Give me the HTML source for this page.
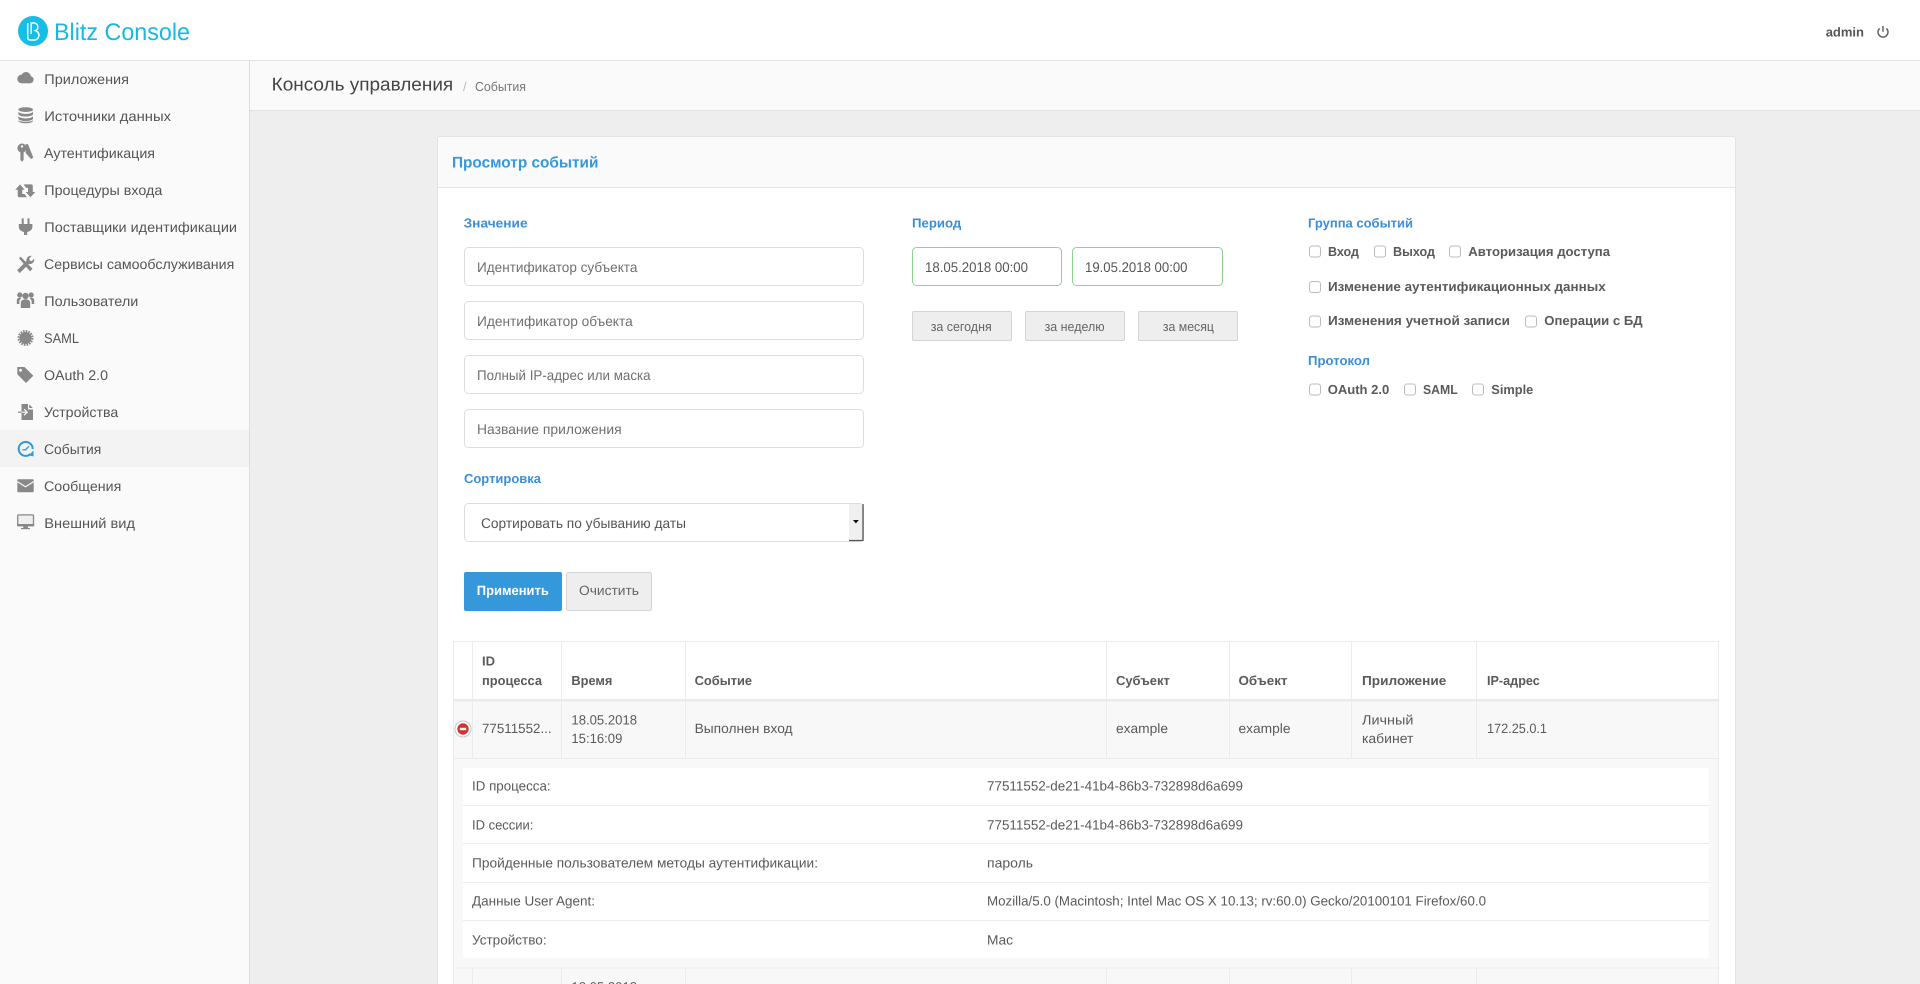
<!DOCTYPE html>
<html lang="ru">
<head>
<meta charset="utf-8">
<title>Blitz Console</title>
<style>
html,body{margin:0;padding:0;width:1920px;height:984px;overflow:hidden;background:#eee}
svg{display:block;font-family:"Liberation Sans",sans-serif;text-rendering:geometricPrecision}
.n{font-size:14px;fill:#555}
.ic{fill:#888}
.lb{font-size:13px;font-weight:bold;fill:#3a8fd9}
.ph{font-size:14px;fill:#6f6f6f}
.d{font-size:14px;fill:#555}
.b{font-size:13px;fill:#666}
.c{font-size:13px;font-weight:bold;fill:#5a5a5a}
.th{font-size:13px;font-weight:bold;fill:#5a5a5a}
.td{font-size:13.5px;fill:#5a5a5a}
.cb{fill:#fff;stroke:#bbb;stroke-width:1}
.inp{fill:#fff;stroke:#ddd;stroke-width:1}
.dt{fill:#fff;stroke:#90d38f;stroke-width:1}
.qb{fill:#eee;stroke:#d4d4d4;stroke-width:1}
.ln{stroke:#ececec;stroke-width:1}
</style>
</head>
<body>
<svg xmlns="http://www.w3.org/2000/svg" width="1920" height="984" viewBox="0 0 1920 984">
<!-- backgrounds -->
<rect width="1920" height="984" fill="#eee"/>
<rect width="1920" height="60" fill="#fff"/>
<rect y="60" width="1920" height="1" fill="#e2e2e2"/>
<rect y="61" width="249" height="923" fill="#fafafa"/>
<rect x="249" y="61" width="1" height="923" fill="#ddd"/>
<rect x="250" y="61" width="1670" height="49" fill="#fafafa"/>
<rect x="250" y="110" width="1670" height="1" fill="#e2e2e2"/>

<!-- header -->
<circle cx="33" cy="31" r="15" fill="#16bde5"/>
<path d="M27.7 23V37.5q0 2.5 2.5 2.5H34.5a4.8 4.8 0 0 0 1-9.4a4 4 0 0 0-1.2-7.6H31.2V34" fill="none" stroke="#fff" stroke-width="1.5"/>
<text x="54" y="40" font-size="24" fill="#18b8e2" textLength="136" lengthAdjust="spacingAndGlyphs">Blitz Console</text>
<text x="1825.7" y="36.7" font-size="13" font-weight="bold" fill="#555" textLength="38.3" lengthAdjust="spacingAndGlyphs">admin</text>
<path d="M1879.6 28.4A5 5 0 1 0 1886.4 28.4M1883 26V31.8" fill="none" stroke="#666" stroke-width="1.5"/>

<!-- page heading -->
<text x="271.7" y="90.5" font-size="18.5" fill="#444" textLength="181.5" lengthAdjust="spacingAndGlyphs">Консоль управления</text>
<text x="463" y="91" font-size="13" fill="#bbb">/</text>
<text x="475" y="91" font-size="13" fill="#777" textLength="51" lengthAdjust="spacingAndGlyphs">События</text>

<!-- sidebar -->
<rect y="430" width="249" height="37" fill="#f3f3f3"/>
<text class="n" x="44.3" y="84" textLength="84.7" lengthAdjust="spacingAndGlyphs">Приложения</text>
<text class="n" x="44.3" y="121" textLength="126.7" lengthAdjust="spacingAndGlyphs">Источники данных</text>
<text class="n" x="44" y="158" textLength="111" lengthAdjust="spacingAndGlyphs">Аутентификация</text>
<text class="n" x="44.3" y="195" textLength="118" lengthAdjust="spacingAndGlyphs">Процедуры входа</text>
<text class="n" x="44.3" y="232" textLength="192.7" lengthAdjust="spacingAndGlyphs">Поставщики идентификации</text>
<text class="n" x="44" y="269" textLength="190.3" lengthAdjust="spacingAndGlyphs">Сервисы самообслуживания</text>
<text class="n" x="44.3" y="306" textLength="94" lengthAdjust="spacingAndGlyphs">Пользователи</text>
<text class="n" x="44" y="343" textLength="35" lengthAdjust="spacingAndGlyphs">SAML</text>
<text class="n" x="44" y="380" textLength="64" lengthAdjust="spacingAndGlyphs">OAuth 2.0</text>
<text class="n" x="44" y="417" textLength="74.3" lengthAdjust="spacingAndGlyphs">Устройства</text>
<text class="n" x="44" y="454" textLength="57.3" lengthAdjust="spacingAndGlyphs">События</text>
<text class="n" x="44" y="491" textLength="77.3" lengthAdjust="spacingAndGlyphs">Сообщения</text>
<text class="n" x="44.3" y="528" textLength="90.7" lengthAdjust="spacingAndGlyphs">Внешний вид</text>

<!-- sidebar icons -->
<g class="ic">
<!-- cloud -->
<circle cx="21.5" cy="79" r="4.2"/><circle cx="26" cy="77" r="5"/><circle cx="30" cy="79.7" r="3.6"/><rect x="21.5" y="79.5" width="8.5" height="3.8"/>
<!-- database -->
<ellipse cx="25.7" cy="109.6" rx="7.3" ry="2.4"/>
<path d="M18.4 111.8v2.3c0 1.3 3.3 2.4 7.3 2.4s7.3-1.1 7.3-2.4v-2.3c-1 1.3-3.8 2.2-7.3 2.2s-6.3-.9-7.3-2.2z"/>
<path d="M18.4 116.3v2.3c0 1.3 3.3 2.4 7.3 2.4s7.3-1.1 7.3-2.4v-2.3c-1 1.3-3.8 2.2-7.3 2.2s-6.3-.9-7.3-2.2z"/>
<path d="M18.4 120.3v.6c0 1.3 3.3 2.4 7.3 2.4s7.3-1.1 7.3-2.4v-.6c-1 1.3-3.8 1.4-7.3 1.4s-6.3-.1-7.3-1.4z"/>
<!-- keys -->
<path fill-rule="evenodd" d="M22 143.5a4.6 4.6 0 0 1 1.6 8.9V160l-1.6 1.7-1.6-1.7v-7.6A4.6 4.6 0 0 1 22 143.5zM22 145.2a1.2 1.2 0 1 0 .01 0z"/>
<path d="M25.5 144l2.5.2 5.3 13.3-2.2 1.6-5.6-6.2c.8-2.6.8-6 0-8.9z"/>
<!-- retweet -->
<path d="M15.3 189.7L20 184.4 24.7 189.7H22.3V194H24.5L27 197.3H19.5Q17.7 197.3 17.7 195.5V189.7Z"/>
<path d="M35.3 192L30.5 197.3 25.7 192H28V187.7H26L23.5 184.4H31Q32.8 184.4 32.8 186.2V192Z"/>
<!-- plug -->
<rect x="21.7" y="218.3" width="2" height="6"/><rect x="27.5" y="218.3" width="2" height="6"/>
<path d="M18.8 224H32.4V226.8C32.4 229.8 29.8 231.6 27.2 232V235H24V232C21.4 231.6 18.8 229.8 18.8 226.8Z"/>
<!-- tools -->
<path d="M19 258.2l1.6-1.6 12 12.2-2.6 2.6z"/>
<path d="M18.4 270.3l9.3-9.4a4.3 4.3 0 0 1 5.2-5l-2.5 2.6.6 2 2 .6 2.3-2.5a4.3 4.3 0 0 1-5.1 5.3l-9.3 9.2z" transform="translate(-1.2 0)"/>
<!-- users -->
<circle cx="25.5" cy="296" r="3.2"/><circle cx="19.8" cy="295" r="2.6"/><circle cx="31.2" cy="295" r="2.6"/>
<path d="M20.8 308V303c0-2.6 1.8-3.6 4.7-3.6s4.7 1 4.7 3.6v5z"/>
<path d="M16.8 304v-3.5c0-2 1.2-2.6 3-2.6.6 0 1 .1 1.6.4-1.2.8-2.1 2.2-2.1 4v1.7z"/>
<path d="M34.2 304v-3.5c0-2-1.2-2.6-3-2.6-.6 0-1 .1-1.6.4 1.2.8 2.1 2.2 2.1 4v1.7z"/>
<!-- seal -->
<circle cx="25.5" cy="338" r="6"/>
<circle cx="25.5" cy="338" r="6.8" fill="none" stroke="#888" stroke-width="2.4" stroke-dasharray="1.6 1.07"/>
<!-- tag -->
<path fill-rule="evenodd" d="M17.3 367H24.5L33.3 375.8 26 383 17.3 374.2ZM20.5 368.8a1.5 1.5 0 1 0 .01 0Z"/>
<!-- file import -->
<path d="M21.5 404H28V409.5H33V420H21.5Z"/><path d="M29.2 404.2L32.8 408H29.2Z"/>
</g>
<path d="M18 412.2H27M24 409.2L27.2 412.2 24 415.2" fill="none" stroke="#fafafa" stroke-width="1.2"/>
<path d="M18 412.2H21.5" stroke="#888" stroke-width="1.2"/>
<!-- events -->
<path d="M30.5 454A7 7 0 1 1 32.7 449" fill="none" stroke="#3498db" stroke-width="2"/>
<path d="M22.5 449.8H25.6L28.8 446.4" fill="none" stroke="#3498db" stroke-width="1.4"/>
<path d="M33.5 450.5L29 455.2 33.5 456.5Z" fill="#3498db"/>
<!-- mail -->
<rect x="17.3" y="479.3" width="16.4" height="13" rx="1" class="ic"/>
<path d="M17.3 481.6L25.5 486.8 33.7 481.6" fill="none" stroke="#f6f6f6" stroke-width="1.2"/>
<!-- monitor -->
<rect x="17.7" y="514.9" width="15.8" height="10.8" rx="1" fill="#efefef" stroke="#888" stroke-width="1.3"/>
<rect x="17" y="524" width="17.2" height="2.2" class="ic"/>
<rect x="23.3" y="526" width="4.6" height="2" class="ic"/><rect x="21" y="528" width="9" height="1.2" class="ic"/>

<!-- panel -->
<rect x="437.5" y="136.5" width="1298" height="860" rx="2" fill="#fff" stroke="#e4e4e4"/>
<path d="M438 187V139q0-2 2-2H1733q2 0 2 2V187Z" fill="#fafafa"/>
<rect x="438" y="187" width="1297" height="1" fill="#e6e6e6"/>
<text x="452" y="167.5" font-size="15.5" font-weight="bold" fill="#3498db" textLength="146.4" lengthAdjust="spacingAndGlyphs">Просмотр событий</text>

<!-- column 1 -->
<text class="lb" x="463.6" y="227.7" textLength="64" lengthAdjust="spacingAndGlyphs">Значение</text>
<rect class="inp" x="464.5" y="247.5" width="399" height="38" rx="4"/>
<rect class="inp" x="464.5" y="301.5" width="399" height="38" rx="4"/>
<rect class="inp" x="464.5" y="355.5" width="399" height="38" rx="4"/>
<rect class="inp" x="464.5" y="409.5" width="399" height="38" rx="4"/>
<text class="ph" x="477" y="272" textLength="160.4" lengthAdjust="spacingAndGlyphs">Идентификатор субъекта</text>
<text class="ph" x="477" y="326" textLength="155.7" lengthAdjust="spacingAndGlyphs">Идентификатор объекта</text>
<text class="ph" x="477" y="380" textLength="173.6" lengthAdjust="spacingAndGlyphs">Полный IP-адрес или маска</text>
<text class="ph" x="477" y="434" textLength="144.6" lengthAdjust="spacingAndGlyphs">Название приложения</text>
<text class="lb" x="464" y="483" textLength="77" lengthAdjust="spacingAndGlyphs">Сортировка</text>
<rect class="inp" x="464.5" y="503.5" width="399" height="38" rx="4"/>
<text class="d" x="481" y="528.2" textLength="205" lengthAdjust="spacingAndGlyphs">Сортировать по убыванию даты</text>
<rect x="849" y="504" width="14" height="36" fill="#f0f0f0"/>
<path d="M863 504V540.5H849" fill="none" stroke="#555" stroke-width="1.3"/>
<path d="M853 520H858.8L855.9 523.5Z" fill="#111"/>
<rect x="464" y="572" width="98" height="39" rx="2" fill="#3498db"/>
<text x="476.8" y="595" font-size="13.5" font-weight="bold" fill="#fff" textLength="72" lengthAdjust="spacingAndGlyphs">Применить</text>
<rect class="qb" x="566.5" y="572.5" width="85" height="38" rx="2"/>
<text x="579" y="595" font-size="13.5" fill="#666" textLength="60" lengthAdjust="spacingAndGlyphs">Очистить</text>

<!-- column 2 -->
<text class="lb" x="912" y="227.7" textLength="49.3" lengthAdjust="spacingAndGlyphs">Период</text>
<rect class="dt" x="912.5" y="247.5" width="149" height="38" rx="4"/>
<rect class="dt" x="1072.5" y="247.5" width="150" height="38" rx="4"/>
<text class="d" x="925" y="272" textLength="103" lengthAdjust="spacingAndGlyphs">18.05.2018 00:00</text>
<text class="d" x="1085" y="272" textLength="102.5" lengthAdjust="spacingAndGlyphs">19.05.2018 00:00</text>
<rect class="qb" x="912.5" y="311.5" width="99" height="29" rx="1.5"/>
<rect class="qb" x="1025.5" y="311.5" width="99" height="29" rx="1.5"/>
<rect class="qb" x="1138.5" y="311.5" width="99" height="29" rx="1.5"/>
<text class="b" x="930.7" y="331" textLength="61" lengthAdjust="spacingAndGlyphs">за сегодня</text>
<text class="b" x="1044.6" y="331" textLength="60" lengthAdjust="spacingAndGlyphs">за неделю</text>
<text class="b" x="1162.9" y="331" textLength="51" lengthAdjust="spacingAndGlyphs">за месяц</text>

<!-- column 3 -->
<text class="lb" x="1308" y="227.7" textLength="105" lengthAdjust="spacingAndGlyphs">Группа событий</text>
<rect class="cb" x="1309.5" y="246" width="11" height="11" rx="2.5"/>
<text class="c" x="1328" y="256" textLength="31" lengthAdjust="spacingAndGlyphs">Вход</text>
<rect class="cb" x="1374.5" y="246" width="11" height="11" rx="2.5"/>
<text class="c" x="1393" y="256" textLength="42" lengthAdjust="spacingAndGlyphs">Выход</text>
<rect class="cb" x="1449.5" y="246" width="11" height="11" rx="2.5"/>
<text class="c" x="1468.3" y="256" textLength="141.7" lengthAdjust="spacingAndGlyphs">Авторизация доступа</text>
<rect class="cb" x="1309.5" y="281.5" width="11" height="11" rx="2.5"/>
<text class="c" x="1328" y="291" textLength="277.7" lengthAdjust="spacingAndGlyphs">Изменение аутентификационных данных</text>
<rect class="cb" x="1309.5" y="316" width="11" height="11" rx="2.5"/>
<text class="c" x="1328" y="325" textLength="182" lengthAdjust="spacingAndGlyphs">Изменения учетной записи</text>
<rect class="cb" x="1525.5" y="316" width="11" height="11" rx="2.5"/>
<text class="c" x="1544.3" y="325" textLength="98.3" lengthAdjust="spacingAndGlyphs">Операции с БД</text>
<text class="lb" x="1308" y="365" textLength="62" lengthAdjust="spacingAndGlyphs">Протокол</text>
<rect class="cb" x="1309.5" y="384" width="11" height="11" rx="2.5"/>
<text class="c" x="1327.7" y="394" textLength="61.6" lengthAdjust="spacingAndGlyphs">OAuth 2.0</text>
<rect class="cb" x="1404.5" y="384" width="11" height="11" rx="2.5"/>
<text class="c" x="1423" y="394" textLength="34.7" lengthAdjust="spacingAndGlyphs">SAML</text>
<rect class="cb" x="1472.5" y="384" width="11" height="11" rx="2.5"/>
<text class="c" x="1491.3" y="394" textLength="42" lengthAdjust="spacingAndGlyphs">Simple</text>

<!-- table -->
<rect x="453" y="701" width="1266" height="283" fill="#f8f8f8"/>
<rect x="453.5" y="641.5" width="1265" height="343" fill="none" stroke="#ececec"/>
<rect x="453" y="699" width="1266" height="2.5" fill="#ebebeb"/>
<rect x="453" y="758" width="1266" height="1" fill="#ececec"/>
<rect x="453" y="967.5" width="1266" height="1" fill="#ececec"/>
<path class="ln" d="M472.5 641V758M561.5 641V758M685.5 641V758M1106.5 641V758M1229.5 641V758M1351.5 641V758M1476.5 641V758M472.5 968V984M561.5 968V984M685.5 968V984M1106.5 968V984M1229.5 968V984M1351.5 968V984M1476.5 968V984"/>

<text class="th" x="482" y="665.7" textLength="13" lengthAdjust="spacingAndGlyphs">ID</text>
<text class="th" x="482" y="685" textLength="60" lengthAdjust="spacingAndGlyphs">процесса</text>
<text class="th" x="571.4" y="685" textLength="41" lengthAdjust="spacingAndGlyphs">Время</text>
<text class="th" x="694.6" y="685" textLength="57.5" lengthAdjust="spacingAndGlyphs">Событие</text>
<text class="th" x="1116" y="685" textLength="53.8" lengthAdjust="spacingAndGlyphs">Субъект</text>
<text class="th" x="1238.5" y="685" textLength="49" lengthAdjust="spacingAndGlyphs">Объект</text>
<text class="th" x="1362" y="685" textLength="84.3" lengthAdjust="spacingAndGlyphs">Приложение</text>
<text class="th" x="1487" y="685" textLength="52.8" lengthAdjust="spacingAndGlyphs">IP-адрес</text>

<circle cx="463" cy="729" r="8" fill="#fff" stroke="#c8c8c8" stroke-width="1"/>
<circle cx="463" cy="729" r="5.7" fill="#d33333"/>
<rect x="459.8" y="727.8" width="6.4" height="2.4" fill="#fff"/>

<text class="td" x="482" y="733" textLength="69.6" lengthAdjust="spacingAndGlyphs">77511552...</text>
<text class="td" x="571.4" y="724.3" textLength="65.7" lengthAdjust="spacingAndGlyphs">18.05.2018</text>
<text class="td" x="571.4" y="743" textLength="51" lengthAdjust="spacingAndGlyphs">15:16:09</text>
<text class="td" x="694.6" y="733" textLength="98" lengthAdjust="spacingAndGlyphs">Выполнен вход</text>
<text class="td" x="1116" y="733" textLength="52" lengthAdjust="spacingAndGlyphs">example</text>
<text class="td" x="1238.5" y="733" textLength="52" lengthAdjust="spacingAndGlyphs">example</text>
<text class="td" x="1362" y="724.3" textLength="51.4" lengthAdjust="spacingAndGlyphs">Личный</text>
<text class="td" x="1362" y="743" textLength="51.4" lengthAdjust="spacingAndGlyphs">кабинет</text>
<text class="td" x="1487" y="733" textLength="60" lengthAdjust="spacingAndGlyphs">172.25.0.1</text>

<!-- detail -->
<rect x="463" y="768" width="1246" height="190" fill="#fff"/>
<path class="ln" d="M463 805.5H1709M463 843.5H1709M463 882.5H1709M463 920.5H1709"/>
<text class="td" x="472" y="790.5" textLength="78.6" lengthAdjust="spacingAndGlyphs">ID процесса:</text>
<text class="td" x="472" y="829.3" textLength="61.4" lengthAdjust="spacingAndGlyphs">ID сессии:</text>
<text class="td" x="472" y="867.3" textLength="346" lengthAdjust="spacingAndGlyphs">Пройденные пользователем методы аутентификации:</text>
<text class="td" x="472" y="905.5" textLength="123" lengthAdjust="spacingAndGlyphs">Данные User Agent:</text>
<text class="td" x="472" y="944.3" textLength="74.6" lengthAdjust="spacingAndGlyphs">Устройство:</text>
<text class="td" x="987" y="790.5" textLength="256" lengthAdjust="spacingAndGlyphs">77511552-de21-41b4-86b3-732898d6a699</text>
<text class="td" x="987" y="829.3" textLength="256" lengthAdjust="spacingAndGlyphs">77511552-de21-41b4-86b3-732898d6a699</text>
<text class="td" x="987" y="867.3" textLength="46" lengthAdjust="spacingAndGlyphs">пароль</text>
<text class="td" x="987" y="905.5" textLength="499" lengthAdjust="spacingAndGlyphs">Mozilla/5.0 (Macintosh; Intel Mac OS X 10.13; rv:60.0) Gecko/20100101 Firefox/60.0</text>
<text class="td" x="987" y="944.3" textLength="26" lengthAdjust="spacingAndGlyphs">Mac</text>

<text class="td" x="571.4" y="991.5" textLength="65.7" lengthAdjust="spacingAndGlyphs">18.05.2018</text>
</svg>
</body>
</html>
